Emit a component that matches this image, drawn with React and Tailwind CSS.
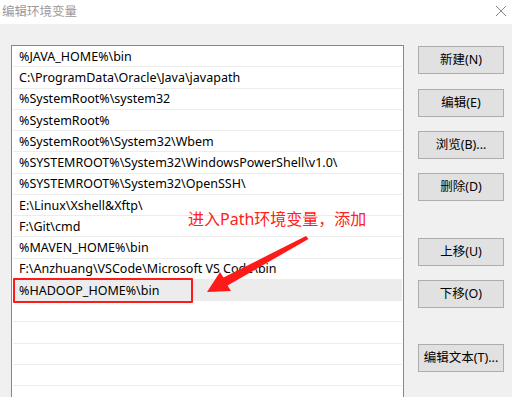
import React from 'react';

const paths = [
  '%JAVA_HOME%\\bin',
  'C:\\ProgramData\\Oracle\\Java\\javapath',
  '%SystemRoot%\\system32',
  '%SystemRoot%',
  '%SystemRoot%\\System32\\Wbem',
  '%SYSTEMROOT%\\System32\\WindowsPowerShell\\v1.0\\',
  '%SYSTEMROOT%\\System32\\OpenSSH\\',
  'E:\\Linux\\Xshell&Xftp\\',
  'F:\\Git\\cmd',
  '%MAVEN_HOME%\\bin',
  'F:\\Anzhuang\\VSCode\\Microsoft VS Code\\bin',
  '%HADOOP_HOME%\\bin',
  '',
  '',
  '',
  '',
  '',
];

const buttons = [
  { label: '新建(N)', mt: 'mt-0' },
  { label: '编辑(E)', mt: 'mt-[15px]' },
  { label: '浏览(B)...', mt: 'mt-[14px]' },
  { label: '删除(D)', mt: 'mt-[14px]' },
  { label: '上移(U)', mt: 'mt-[37px]' },
  { label: '下移(O)', mt: 'mt-[14px]' },
  { label: '编辑文本(T)...', mt: 'mt-[36px]' },
];

const font = "font-['Noto_Sans','Noto_Sans_CJK_SC',sans-serif]";

export default function App() {
  return (
    <div className={`relative w-[512px] h-[397px] overflow-hidden bg-[#f0f0f0] flex flex-col ${font}`}>
      {/* title bar */}
      <div className="h-[24px] bg-white flex items-center justify-between shrink-0">
        <span className="pl-[2px] text-[12.5px] text-[#9a9a9a]">编辑环境变量</span>
        <svg width="12" height="12" viewBox="0 0 12 12" className="mr-[5px] mb-[3px]">
          <path d="M1 1 L11 11 M11 1 L1 11" stroke="#8a8a8a" strokeWidth="1" />
        </svg>
      </div>

      <div className="flex pl-[11px] pt-[21px]">
        {/* list */}
        <div className="w-[393px] h-[360px] border border-[#828790] bg-white px-[1px] overflow-hidden">
          {paths.map((p, i) => (
            <div
              key={i}
              className={`h-[21.25px] border-b border-[#ececec] flex items-center pl-[6px] pt-[2px] text-[12.5px] text-black whitespace-nowrap ${
                i === 11 ? 'bg-[#ececec]' : ''
              }`}
            >
              {p}
            </div>
          ))}
        </div>

        {/* buttons */}
        <div className="ml-[14px] pt-[1px] flex flex-col">
          {buttons.map((b) => (
            <button
              key={b.label}
              className={`${b.mt} w-[86px] h-[28px] border border-[#adadad] bg-[#e1e1e1] text-[12.5px] text-black flex items-center justify-center`}
            >
              {b.label}
            </button>
          ))}
        </div>
      </div>

      {/* annotation */}
      <div className="absolute left-[188px] top-[209px] text-[16px] leading-[20px] text-[#ff2020] whitespace-nowrap">
        进入Path环境变量，添加
      </div>
      <div className="absolute left-[13px] top-[278px] w-[180px] h-[25px] border-2 border-[#ff1a1a] rounded-[1px]" />
      <svg className="absolute left-0 top-0" width="512" height="397" viewBox="0 0 512 397">
        <polygon
          points="306,236 308.5,239 227.5,285.5 231,291 207,292 220,272 223.5,277.5"
          fill="#ff1a1a"
        />
      </svg>
    </div>
  );
}
